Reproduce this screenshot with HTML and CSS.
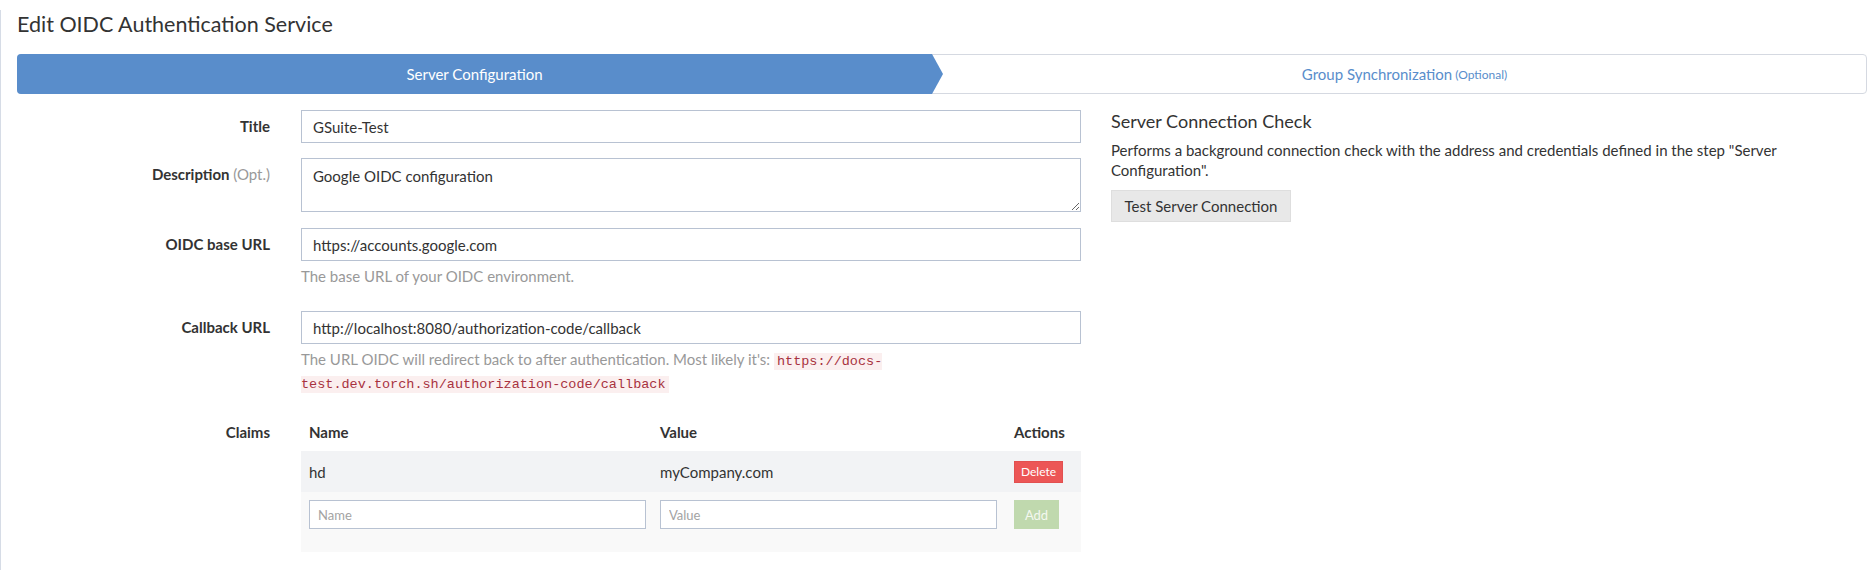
FILE: index.html
```html
<!DOCTYPE html>
<html>
<head>
<meta charset="utf-8">
<link rel="stylesheet" href="styles.css">
</head>
<body>
<div class="page">
  <h1 class="page-title">Edit OIDC Authentication Service</h1>
  <div class="stepper">
    <div class="step step-active">Server Configuration</div>
    <div class="step">Group Synchronization <span class="step-opt">(Optional)</span></div>
  </div>
  <div class="content">
    <div class="form">
      <div class="field field-title">
        <div class="label">Title</div>
        <div class="control"><input class="input" type="text" value="GSuite-Test"></div>
      </div>
      <div class="field field-desc">
        <div class="label">Description <span class="opt">(Opt.)</span></div>
        <div class="control"><textarea class="textarea">Google OIDC configuration</textarea></div>
      </div>
      <div class="field field-base">
        <div class="label">OIDC base URL</div>
        <div class="control">
          <input class="input" type="text" value="https://accounts.google.com">
          <div class="help help-base">The base URL of your OIDC environment.</div>
        </div>
      </div>
      <div class="field field-callback">
        <div class="label">Callback URL</div>
        <div class="control">
          <input class="input" type="text" value="http://localhost:8080/authorization-code/callback">
          <div class="help help-callback">The URL OIDC will redirect back to after authentication. Most likely it's: <code class="code">https://docs-test.dev.torch.sh/authorization-code/callback</code></div>
        </div>
      </div>
      <div class="field field-claims">
        <div class="label label-claims">Claims</div>
        <div class="claims">
          <div class="claims-row claims-head">
            <div class="cell">Name</div>
            <div class="cell">Value</div>
            <div class="cell">Actions</div>
          </div>
          <div class="claims-row claims-item">
            <div class="cell">hd</div>
            <div class="cell">myCompany.com</div>
            <div class="cell"><button class="btn-delete" type="button">Delete</button></div>
          </div>
          <div class="claims-row claims-new">
            <div class="cell"><input class="input-sm" type="text" placeholder="Name"></div>
            <div class="cell"><input class="input-sm" type="text" placeholder="Value"></div>
            <div class="cell"><button class="btn-add" type="button">Add</button></div>
          </div>
        </div>
      </div>
    </div>
    <div class="check">
      <h3 class="check-title">Server Connection Check</h3>
      <p class="check-text">Performs a background connection check with the address and credentials defined in the step "Server Configuration".</p>
      <button class="btn-test" type="button">Test Server Connection</button>
    </div>
  </div>
</div>
</body>
</html>
```

FILE: styles.css
```css
* { box-sizing: border-box; }

html, body {
  margin: 0;
  padding: 0;
  background: #fff;
}

body {
  font-family: Lato, "Open Sans", sans-serif;
  font-size: 15px;
  color: #333;
}

.page {
  min-height: 570px;
  border-left: 1px solid #d6dce6;
  padding: 0 9px 0 16px;
}

.page-title {
  margin: 10px 0 16px;
  font-size: 21.5px;
  line-height: 28px;
  font-weight: 400;
  color: #333;
}

/* stepper */
.stepper {
  display: flex;
  height: 40px;
  border: 1px solid #d5d9e1;
  border-radius: 4px;
}

.step {
  flex: 1 1 0;
  display: flex;
  align-items: center;
  justify-content: center;
  font-size: 15px;
  color: #598dcb;
  padding-left: 11px;
}

.step-active {
  position: relative;
  flex: 0 0 915px;
  margin: -1px 0 -1px -1px;
  background: #598dcb;
  color: #fff;
  border-radius: 4px 0 0 4px;
  padding-left: 0;
}

.step-active::after {
  content: "";
  position: absolute;
  top: 0;
  right: -11px;
  width: 11px;
  height: 100%;
  background: #598dcb;
  clip-path: polygon(0 0, 100% 50%, 0 100%);
}

.step-opt {
  font-size: 12px;
  margin-left: 3px;
}

/* content */
.content {
  display: grid;
  grid-template-columns: 1064px 1fr;
  column-gap: 30px;
  margin-top: 16px;
}

.field {
  display: grid;
  grid-template-columns: 253px 780px;
  column-gap: 31px;
  align-items: start;
}

.field-title { margin-bottom: 15px; }
.field-desc { margin-bottom: 16px; }
.field-base { margin-bottom: 25px; }
.field-callback { margin-bottom: 19px; }

.label {
  text-align: right;
  font-weight: 700;
  font-size: 15px;
  line-height: 33px;
  color: #333;
}

.opt {
  font-weight: 400;
  color: #999;
}

.label-claims {
  padding-top: 9px;
  line-height: 20px;
}

.input,
.textarea {
  display: block;
  width: 100%;
  height: 33px;
  border: 1px solid #b8c2d2;
  border-radius: 0;
  padding: 0 11px;
  font-family: Lato, "Open Sans", sans-serif;
  font-size: 15px;
  color: #333;
  background: #fff;
  outline: none;
}

.textarea {
  height: 54px;
  padding: 7px 11px;
  line-height: 20px;
  resize: vertical;
}

.help {
  color: #999;
  font-size: 15px;
}

.help-base {
  margin-top: 5px;
  line-height: 20px;
}

.help-callback {
  margin-top: 4px;
  line-height: 23px;
  padding-right: 190px;
}

.code {
  font-family: "Liberation Mono", "DejaVu Sans Mono", monospace;
  font-size: 13.5px;
  line-height: 1;
  color: #a8323f;
  background: #fbefef;
  padding: 1px 3px;
}

/* claims table */
.claims {
  display: flex;
  flex-direction: column;
}

.claims-row {
  display: grid;
  grid-template-columns: 351px 354px 75px;
}

.claims-head {
  height: 38px;
  align-items: center;
  font-weight: 700;
  color: #333;
}

.claims-head .cell {
  padding-left: 8px;
  line-height: 20px;
}

.claims-item {
  height: 41px;
  align-items: center;
  background: #f2f3f5;
}

.claims-item .cell {
  padding-left: 8px;
}

.claims-new {
  height: 60px;
  align-items: start;
  background: #f9f9f9;
  padding-top: 8px;
}

.claims-new .cell {
  padding-left: 8px;
}

.input-sm {
  display: block;
  width: 337px;
  height: 29px;
  border: 1px solid #b8c2d2;
  border-radius: 0;
  padding: 0 8px;
  font-family: Lato, "Open Sans", sans-serif;
  font-size: 13px;
  color: #333;
  background: #fff;
  outline: none;
}

.input-sm::placeholder {
  color: #a3a3a3;
}

.btn-delete {
  display: block;
  width: 49px;
  height: 22px;
  border: 1px solid #e25050;
  background: #ec5656;
  color: #fff;
  font-family: Lato, "Open Sans", sans-serif;
  font-size: 12px;
  padding: 0;
  border-radius: 0;
}

.btn-add {
  display: block;
  width: 45px;
  height: 29px;
  border: none;
  background: #c0d9ae;
  color: #f4f8f0;
  font-family: Lato, "Open Sans", sans-serif;
  font-size: 13px;
  padding: 0;
  border-radius: 0;
}

/* right column */
.check-title {
  margin: 0;
  font-size: 18px;
  line-height: 22px;
  font-weight: 400;
  color: #333;
}

.check-text {
  margin: 8px 0 10px;
  font-size: 15px;
  line-height: 20px;
  color: #333;
}

.btn-test {
  display: block;
  height: 32px;
  width: 180px;
  border: 1px solid #dedede;
  background: #e8e8e8;
  color: #333;
  font-family: Lato, "Open Sans", sans-serif;
  font-size: 15px;
  padding: 0;
  border-radius: 0;
}
```
